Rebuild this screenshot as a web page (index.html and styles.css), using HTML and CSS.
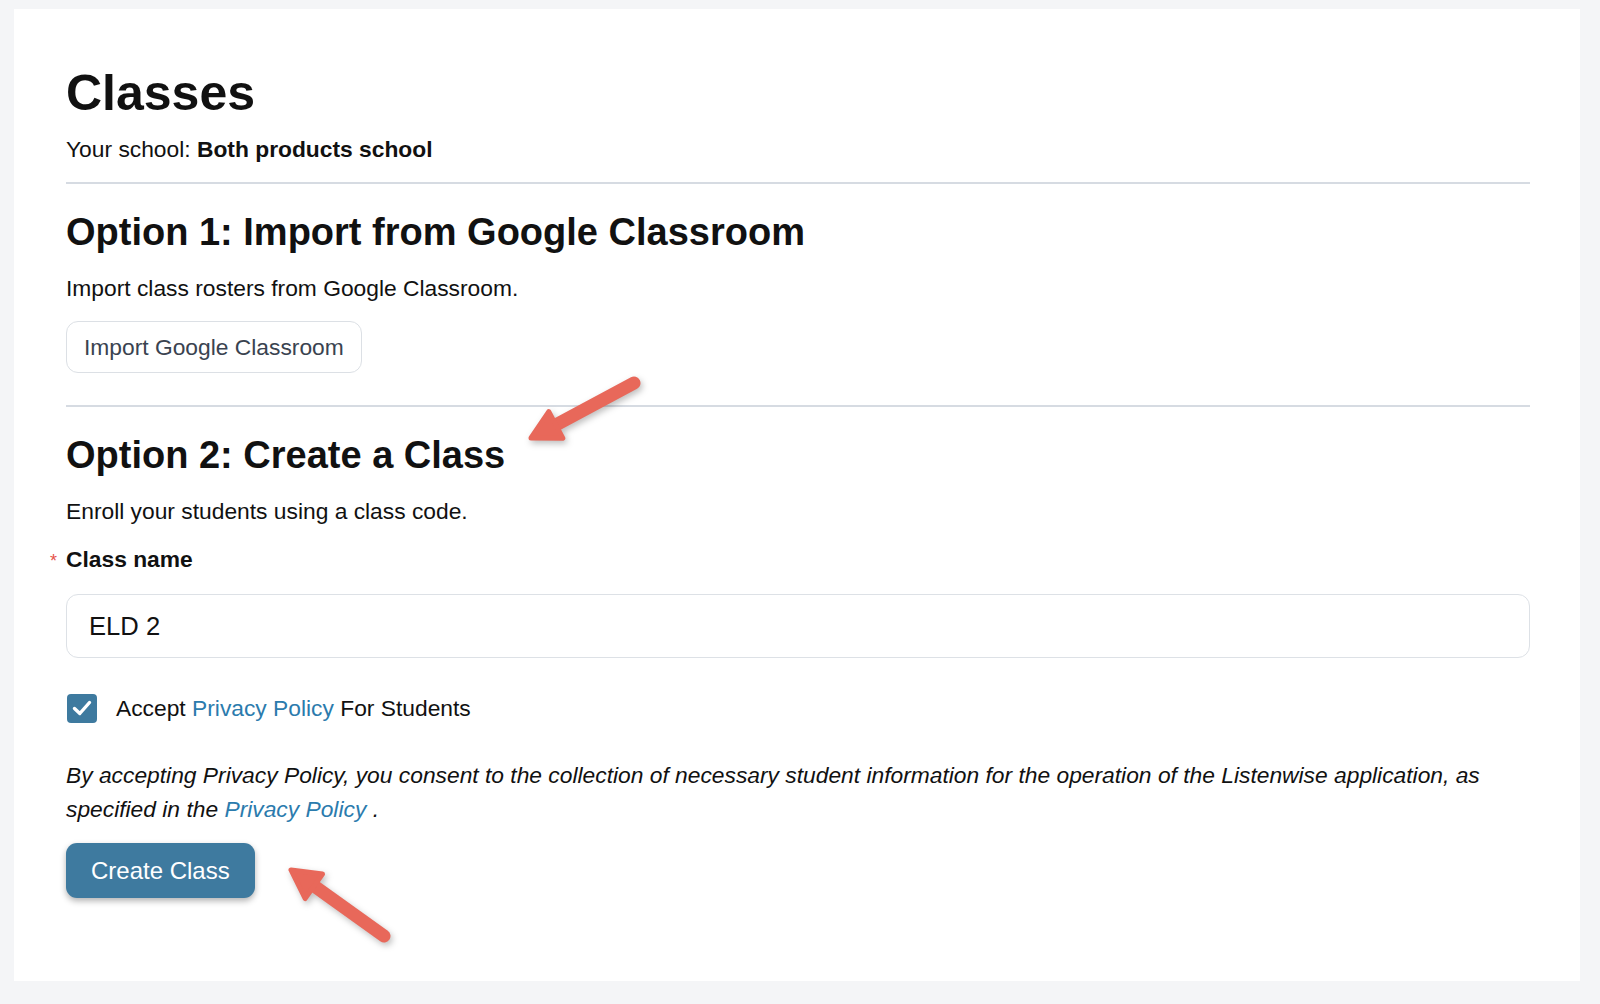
FILE: index.html
```html
<!DOCTYPE html>
<html lang="en">
<head>
    <meta charset="UTF-8">
    <meta name="viewport" content="width=device-width, initial-scale=1.0">
    <title>Classes</title>
    <link rel="stylesheet" href="styles.css">
</head>
<body>
    <div class="card">
        <h1 class="page-title">Classes</h1>
        <p class="school">Your school: <b>Both products school</b></p>

        <hr class="divider">

        <!-- option 1 -->
        <h2 class="option-title">Option 1: Import from Google Classroom</h2>
        <p class="text">Import class rosters from Google Classroom.</p>
        <button class="btn-outline">Import Google Classroom</button>

        <hr class="divider divider-2">

        <!-- option 2 -->
        <h2 class="option-title">Option 2: Create a Class</h2>
        <p class="text">Enroll your students using a class code.</p>

        <label class="field-label"><span class="required">*</span>Class name</label>
        <div class="input">ELD 2</div>

        <div class="check-row">
            <span class="checkbox">
                <svg width="24" height="24" viewBox="0 0 24 24">
                    <path d="M4.5 12.5 L9.8 17.5 L19.5 6.5" fill="none" stroke="#fff" stroke-width="3.4" stroke-linecap="round" stroke-linejoin="round"/>
                </svg>
            </span>
            <span class="check-text">Accept <a href="#">Privacy Policy</a> For Students</span>
        </div>

        <p class="consent">By accepting Privacy Policy, you consent to the collection of necessary student information for the operation of the Listenwise application, as specified in the <a href="#">Privacy Policy</a> .</p>

        <button class="btn-primary">Create Class</button>
    </div>

    <!-- annotation arrows -->
    <svg class="arrows" width="1600" height="1004" viewBox="0 0 1600 1004">
        <g fill="#e8685a" stroke="#e8685a" stroke-linejoin="round" stroke-linecap="round">
            <line x1="634" y1="383" x2="552" y2="427" stroke-width="13"/>
            <polygon points="531,438 548.8,411.6 562.8,438.2" stroke-width="5"/>
            <line x1="384" y1="936" x2="310" y2="883" stroke-width="13"/>
            <polygon points="291,870 322.5,874.1 305.1,898.5" stroke-width="5"/>
        </g>
    </svg>
</body>
</html>
```

FILE: styles.css
```css
body {
    margin: 0;
    padding: 9px 20px 23px 14px;
    background-color: #f4f5f7;
    font-family: 'Liberation Sans', Arial, sans-serif;
    color: #111;
    position: relative;
}

.card {
    background: #fff;
    height: 972px;
    box-sizing: border-box;
    padding: 54px 50px 0 52px;
}

.page-title {
    margin: 0;
    font-size: 50px;
    line-height: 60px;
    font-weight: bold;
}

.school {
    margin: 9px 0 0;
    font-size: 22.8px;
    line-height: 34px;
}

.divider {
    margin: 16px 0 0;
    border: 0;
    border-top: 2px solid #d6dbe2;
}

.divider-2 {
    margin-top: 32px;
}

.option-title {
    margin: 25px 0 0;
    font-size: 38px;
    line-height: 46px;
    font-weight: bold;
}

.text {
    margin: 16px 0 0;
    font-size: 22.8px;
    line-height: 34px;
}

/* buttons */
.btn-outline {
    display: block;
    margin-top: 16px;
    height: 52px;
    padding: 0 17px;
    background: #fff;
    border: 1px solid #dce0e5;
    border-radius: 12px;
    font-family: inherit;
    font-size: 22.8px;
    color: #3a4350;
}

.btn-primary {
    display: block;
    margin-top: 17px;
    height: 55px;
    padding: 0 25px;
    background: #3e7a9f;
    border: 0;
    border-radius: 11px;
    box-shadow: 0 3px 6px rgba(0, 0, 0, 0.3);
    font-family: inherit;
    font-size: 24px;
    color: #fff;
}

/* form */
.field-label {
    display: block;
    margin-top: 14px;
    font-size: 22.8px;
    line-height: 34px;
    font-weight: bold;
}

.required {
    display: inline-block;
    width: 9px;
    margin-left: -16px;
    margin-right: 7px;
    color: #e5534b;
    font-size: 18px;
    font-weight: normal;
}

.input {
    margin-top: 16px;
    height: 64px;
    box-sizing: border-box;
    padding: 0 22px;
    border: 1px solid #dde1e6;
    border-radius: 12px;
    display: flex;
    align-items: center;
    font-size: 25.6px;
}

.check-row {
    margin-top: 33px;
    display: flex;
    align-items: center;
    gap: 19px;
    padding-left: 1px;
}

.checkbox {
    width: 30px;
    height: 29px;
    border-radius: 4px;
    background: #3e7a9f;
    display: flex;
    align-items: center;
    justify-content: center;
}

.check-text {
    font-size: 22.8px;
    line-height: 34px;
}

a {
    color: #2b7bad;
    text-decoration: none;
}

.consent {
    margin: 33px 0 0;
    font-size: 22.8px;
    line-height: 34px;
    font-style: italic;
}

/* arrows over the page */
.arrows {
    position: absolute;
    top: 0;
    left: 0;
    pointer-events: none;
    filter: drop-shadow(2px 3px 3px rgba(0, 0, 0, 0.25));
}
```
